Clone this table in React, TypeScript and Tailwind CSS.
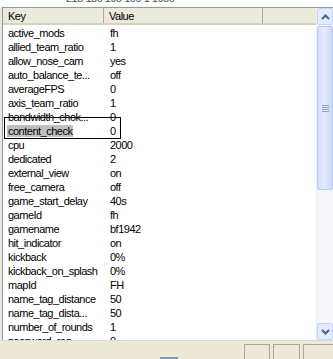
const ROWS: [string, string][] = [
  ['active_mods', 'fh'],
  ['allied_team_ratio', '1'],
  ['allow_nose_cam', 'yes'],
  ['auto_balance_te...', 'off'],
  ['averageFPS', '0'],
  ['axis_team_ratio', '1'],
  ['bandwidth_chok...', '0'],
  ['content_check', '0'],
  ['cpu', '2000'],
  ['dedicated', '2'],
  ['external_view', 'on'],
  ['free_camera', 'off'],
  ['game_start_delay', '40s'],
  ['gameId', 'fh'],
  ['gamename', 'bf1942'],
  ['hit_indicator', 'on'],
  ['kickback', '0%'],
  ['kickback_on_splash', '0%'],
  ['mapId', 'FH'],
  ['name_tag_distance', '50'],
  ['name_tag_dista...', '50'],
  ['number_of_rounds', '1'],
  ['password_req', '0'],
];

const font = { fontFamily: 'Tahoma, "Liberation Sans", Arial, sans-serif' };

function Arrow({ down }: { down?: boolean }) {
  return (
    <svg width="9" height="6" viewBox="0 0 9 6">
      <path d={down ? 'M1 1 L4.5 4.5 L8 1' : 'M1 5 L4.5 1.5 L8 5'} fill="none" stroke="#4d6185" strokeWidth="2" />
    </svg>
  );
}

export default function App() {
  return (
    <div className="w-[333px] h-[359px] bg-[#ece9d8] overflow-hidden flex flex-col text-[11px] tracking-[-0.5px] text-black" style={font}>
      <div className="h-[7px] overflow-hidden bg-white pl-[66px]">
        <div className="-mt-[8px] leading-[13px] text-[#555]">218 180 195 100 1 1050</div>
      </div>
      <div className="flex-1 flex min-h-0 ml-[2px] border-t border-l border-[#7f9db9] bg-white">
        <div className="flex-1 flex flex-col min-w-0 overflow-hidden">
          <div className="flex h-[17px] shrink-0 bg-[#ebeadb] border-b-2 border-[#d6d2c2]">
            <div className="w-[101px] pl-[5px] border-r border-[#aca899] leading-[16px]">Key</div>
            <div className="w-[159px] pl-[5px] border-r border-[#aca899] leading-[16px]">Value</div>
            <div className="flex-1" />
          </div>
          <div className="flex-1 overflow-hidden pt-[1px]">
            {ROWS.map(([k, v]) => {
              const sel = k === 'content_check';
              return (
                <div key={k} className="flex h-[14px] leading-[14px] relative">
                  <div className="w-[101px] pl-[5px] whitespace-nowrap">
                    <span className={sel ? 'bg-[#c0c0c0] px-[1px] -ml-[1px]' : ''}>{k}</span>
                  </div>
                  <div className="pl-[6px] whitespace-nowrap">{v}</div>
                  {sel && (
                    <div className="absolute left-[1px] top-[-7px] w-[117px] h-[22px] border border-black" />
                  )}
                </div>
              );
            })}
          </div>
        </div>
        <div className="w-[17px] flex flex-col bg-[#f7f7fb] border-l border-[#eeeef4]">
          <div className="h-[17px] shrink-0 flex items-center justify-center rounded-[2px] border border-[#c3d3fd] bg-[#e4ebfd]">
            <Arrow />
          </div>
          <div className="h-[164px] shrink-0 my-[1px] rounded-[2px] border border-[#b9c8f3] bg-gradient-to-r from-[#d7e0fc] via-[#e6ebfd] to-[#cad6fb] flex items-center justify-center">
            <div className="flex flex-col gap-[1px]">
              <div className="w-[7px] h-[1px] bg-[#8c9fd8]" />
              <div className="w-[7px] h-[1px] bg-[#8c9fd8]" />
              <div className="w-[7px] h-[1px] bg-[#8c9fd8]" />
              <div className="w-[7px] h-[1px] bg-[#8c9fd8]" />
            </div>
          </div>
          <div className="flex-1" />
          <div className="h-[17px] shrink-0 flex items-center justify-center rounded-[2px] border border-[#c3d3fd] bg-[#e4ebfd]">
            <Arrow down />
          </div>
        </div>
      </div>
      <div className="h-[19px] shrink-0 flex border-t border-[#dedbcc] bg-[#ece9d8] relative">
        <div className="flex-1" />
        <div className="w-[26px] mt-[3px] border border-[#aca899] border-b-0 mr-[3px]" />
        <div className="w-[27px] mt-[3px] border border-[#aca899] border-b-0 mr-[3px]" />
        <div className="w-[30px] mt-[3px] border border-[#aca899] border-b-0 border-r-0" />
        <div className="absolute left-[160px] bottom-0 w-[18px] h-[2px] bg-[#7f9db9]" />
      </div>
    </div>
  );
}
